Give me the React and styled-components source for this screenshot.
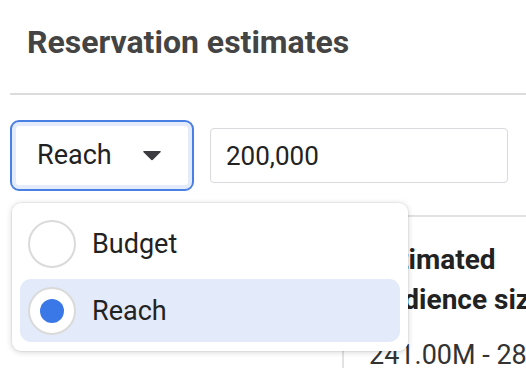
import React from "react";
import styled, { createGlobalStyle } from "styled-components";

const Global = createGlobalStyle`
  html, body { margin: 0; padding: 0; background: #fff; }
  body { font-family: Roboto, "Liberation Sans", sans-serif; overflow: hidden; width: 526px; height: 368px; }
  * { box-sizing: border-box; }
`;

const Page = styled.div`
  position: relative;
  width: 526px;
  height: 368px;
  overflow: hidden;
  padding-left: 10px;
`;

const Header = styled.div`
  padding: 23px 0 0 17px;
  height: 93px;
`;

const Title = styled.h1`
  margin: 0;
  font-size: 32px;
  line-height: 1.2;
  font-weight: 700;
  color: #444;
`;

const Divider = styled.div`
  height: 2px;
  background: #dcdcdc;
`;

const Controls = styled.div`
  display: flex;
  align-items: center;
  gap: 16px;
  margin-top: 25px;
  padding-right: 18px;
  position: relative;
`;

const Select = styled.div`
  width: 184px;
  height: 71px;
  border: 2px solid #4a7fe3;
  border-radius: 9px;
  box-shadow: inset 0 0 0 4px #e4ebfa;
  background: #fff;
  display: flex;
  align-items: center;
  justify-content: space-between;
  padding: 0 30px 0 25px;
  font-size: 27px;
  line-height: 1.2;
  color: #222;
`;

const Input = styled.div`
  flex: 1;
  height: 55px;
  border: 1px solid #d9d9de;
  border-radius: 4px;
  display: flex;
  align-items: center;
  padding-left: 15px;
  font-size: 26px;
  color: #222;
`;

const Body = styled.div`
  display: grid;
  grid-template-columns: 332px 1fr;
  margin-top: 24px;
`;

const Card = styled.div`
  grid-column: 2;
  border-top: 2px solid #e2e2e2;
  border-left: 2px solid #e2e2e2;
  padding: 23px 0 0 25px;
  height: 200px;
  white-space: nowrap;
`;

const CardTitle = styled.div`
  font-size: 28px;
  font-weight: 700;
  line-height: 40px;
  color: #222;
`;

const CardValue = styled.div`
  margin-top: 15px;
  font-size: 27px;
  line-height: 40px;
  color: #333;
`;

const Menu = styled.div`
  position: absolute;
  left: 12px;
  top: 203px;
  width: 396px;
  padding: 9px 8px;
  background: #fff;
  border-radius: 9px;
  box-shadow: 0 1px 6px rgba(0, 0, 0, 0.18), 0 0 0 1px rgba(0, 0, 0, 0.04);
  display: flex;
  flex-direction: column;
  gap: 4px;
`;

const Option = styled.div`
  height: 63px;
  display: flex;
  align-items: center;
  gap: 16px;
  padding-left: 8px;
  border-radius: 11px;
  background: ${(p) => (p.$active ? "#e3eaf9" : "transparent")};
  font-size: 27px;
  color: #222;
`;

const Radio = styled.span`
  width: 48px;
  height: 48px;
  border-radius: 50%;
  border: 2px solid #dadada;
  background: #fff;
  display: flex;
  align-items: center;
  justify-content: center;
  &::after {
    content: "";
    width: 24px;
    height: 24px;
    border-radius: 50%;
    background: ${(p) => (p.$checked ? "#3b78e7" : "transparent")};
  }
`;

const Caret = () => (
  <svg width="20" height="11" viewBox="0 0 20 11">
    <path d="M2 1 H18 Q19.5 1 18.4 2.2 L11.2 9.6 Q10 10.8 8.8 9.6 L1.6 2.2 Q0.5 1 2 1 Z" fill="#3c3c40" />
  </svg>
);

export default function App() {
  return (
    <>
      <Global />
      <Page>
        <Header>
          <Title>Reservation estimates</Title>
        </Header>
        <Divider />
        <Controls>
          <Select>
            <span>Reach</span>
            <Caret />
          </Select>
          <Input>200,000</Input>
        </Controls>
        <Body>
          <Card>
            <CardTitle>Estimated</CardTitle>
            <CardTitle>Audience size</CardTitle>
            <CardValue>241.00M - 280.00M</CardValue>
          </Card>
        </Body>
        <Menu>
          <Option>
            <Radio />
            Budget
          </Option>
          <Option $active>
            <Radio $checked />
            Reach
          </Option>
        </Menu>
      </Page>
    </>
  );
}
